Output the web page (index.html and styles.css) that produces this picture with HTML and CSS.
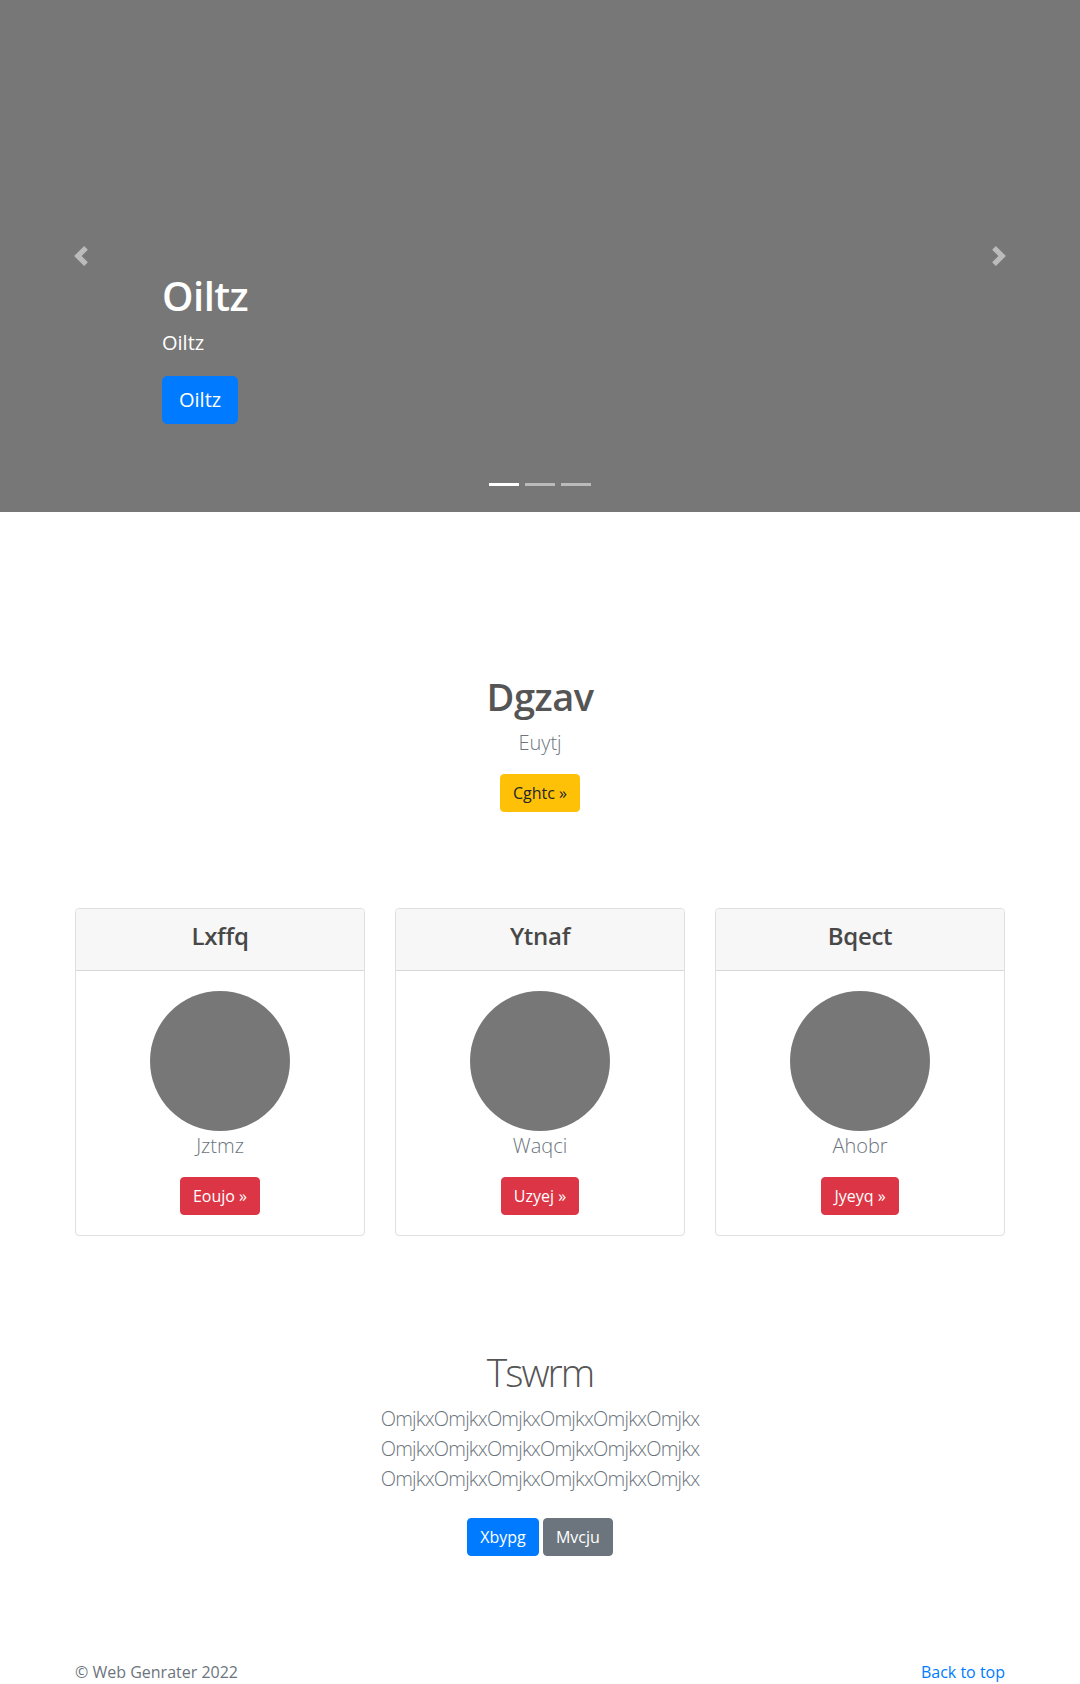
FILE: index.html
```html
<!DOCTYPE html>
<html lang="en">
<head>
<meta charset="utf-8">
<title>Oiltz</title>
<link rel="stylesheet" href="styles.css">
</head>
<body>
<div class="carousel">
  <ol class="indicators">
    <li class="active"></li>
    <li></li>
    <li></li>
  </ol>
  <div class="caption">
    <h1 class="caption-title">Oiltz</h1>
    <p class="caption-sub">Oiltz</p>
    <p class="caption-action"><a class="btn btn-lg btn-primary" href="#">Oiltz</a></p>
  </div>
  <a class="control control-prev" href="#"><svg class="control-icon" viewBox="0 0 8 8" width="20" height="20"><path d="M5.25 0l-4 4 4 4 1.5-1.5-2.5-2.5 2.5-2.5-1.5-1.5z"/></svg></a>
  <a class="control control-next" href="#"><svg class="control-icon" viewBox="0 0 8 8" width="20" height="20"><path d="M2.75 0l-1.5 1.5 2.5 2.5-2.5 2.5 1.5 1.5 4-4-4-4z"/></svg></a>
</div>

<main class="container">
  <section class="intro">
    <h1 class="intro-title">Dgzav</h1>
    <p class="lead">Euytj</p>
    <p><a class="btn btn-warning" href="#">Cghtc &raquo;</a></p>
  </section>

  <div class="cards">
    <div class="card">
      <div class="card-header"><h3 class="card-title">Lxffq</h3></div>
      <div class="card-body">
        <svg class="avatar" width="140" height="140" viewBox="0 0 140 140"><circle cx="70" cy="70" r="70"/></svg>
        <p class="lead card-text">Jztmz</p>
        <a class="btn btn-danger" href="#">Eoujo &raquo;</a>
      </div>
    </div>
    <div class="card">
      <div class="card-header"><h3 class="card-title">Ytnaf</h3></div>
      <div class="card-body">
        <svg class="avatar" width="140" height="140" viewBox="0 0 140 140"><circle cx="70" cy="70" r="70"/></svg>
        <p class="lead card-text">Waqci</p>
        <a class="btn btn-danger" href="#">Uzyej &raquo;</a>
      </div>
    </div>
    <div class="card">
      <div class="card-header"><h3 class="card-title">Bqect</h3></div>
      <div class="card-body">
        <svg class="avatar" width="140" height="140" viewBox="0 0 140 140"><circle cx="70" cy="70" r="70"/></svg>
        <p class="lead card-text">Ahobr</p>
        <a class="btn btn-danger" href="#">Jyeyq &raquo;</a>
      </div>
    </div>
  </div>

  <section class="album">
    <h1 class="album-title">Tswrm</h1>
    <p class="lead album-text">OmjkxOmjkxOmjkxOmjkxOmjkxOmjkx<br>OmjkxOmjkxOmjkxOmjkxOmjkxOmjkx<br>OmjkxOmjkxOmjkxOmjkxOmjkxOmjkx</p>
    <p><a class="btn btn-primary btn-spaced" href="#">Xbypg</a> <a class="btn btn-secondary btn-spaced" href="#">Mvcju</a></p>
  </section>
</main>

<footer class="container footer">
  <p>&copy; Web Genrater 2022</p>
  <p><a class="back-link" href="#">Back to top</a></p>
</footer>
</body>
</html>
```

FILE: styles.css
```css
* { box-sizing: border-box; }

body {
  margin: 0;
  font-family: "Open Sans", "Noto Sans", "Liberation Sans", sans-serif;
  font-size: 16px;
  line-height: 1.5;
  color: #212529;
  background: #fff;
}

p { margin: 0 0 16px; }
h1, h3 { margin: 0 0 8px; }

.container {
  width: 930px;
  margin: 0 auto;
}

/* Buttons */
.btn {
  display: inline-block;
  font-weight: 400;
  text-align: center;
  vertical-align: middle;
  border: 1px solid transparent;
  padding: 6px 12px;
  font-size: 16px;
  line-height: 1.5;
  border-radius: 4px;
  text-decoration: none;
  color: #fff;
}
.btn-lg { padding: 8px 16px; font-size: 20px; border-radius: 5px; }
.btn-primary { background: #007bff; border-color: #007bff; }
.btn-secondary { background: #6c757d; border-color: #6c757d; }
.btn-warning { background: #ffc107; border-color: #ffc107; color: #212529; }
.btn-danger { background: #dc3545; border-color: #dc3545; }
.btn-spaced { margin: 8px 0; vertical-align: baseline; }

.lead {
  font-size: 20px;
  font-weight: 300;
  color: #6c757d;
}

/* Carousel */
.carousel {
  position: relative;
  height: 512px;
  background: #777;
  overflow: hidden;
}
.caption {
  position: absolute;
  left: 15%;
  right: 15%;
  bottom: 52px;
  padding: 20px 0;
  color: #fff;
  z-index: 10;
}
.caption-title {
  font-size: 40px;
  font-weight: 600;
  line-height: 1.2;
  margin-bottom: 8px;
  letter-spacing: -0.5px;
}
.caption-sub {
  font-size: 20px;
  line-height: 1.5;
  margin-bottom: 18px;
}
.caption-action { margin-bottom: 16px; }

.indicators {
  position: absolute;
  left: 15%;
  right: 15%;
  bottom: 0;
  margin: 0 0 16px;
  padding: 0;
  list-style: none;
  display: flex;
  justify-content: center;
  z-index: 15;
}
.indicators li {
  width: 30px;
  height: 23px;
  margin: 0 3px;
  border-top: 10px solid transparent;
  border-bottom: 10px solid transparent;
  background: #fff;
  background-clip: padding-box;
  opacity: .5;
}
.indicators li.active { opacity: 1; }

.control {
  position: absolute;
  top: 0;
  bottom: 0;
  width: 15%;
  display: flex;
  align-items: center;
  justify-content: center;
  opacity: .5;
}
.control-prev { left: 0; }
.control-next { right: 0; }
.control-icon { display: block; fill: #fff; }

/* Intro */
.intro {
  text-align: center;
  padding-top: 162px;
}
.intro-title {
  font-size: 38px;
  font-weight: 600;
  line-height: 1.2;
  color: #555;
  letter-spacing: -0.5px;
}

/* Cards */
.cards {
  margin-top: 96px;
  display: grid;
  grid-template-columns: repeat(3, 1fr);
  gap: 30px;
}
.card {
  border: 1px solid rgba(0, 0, 0, .125);
  border-radius: 4px;
  text-align: center;
  overflow: hidden;
}
.card-header {
  height: 62px;
  padding-top: 13px;
  background: #f7f7f7;
  border-bottom: 1px solid rgba(0, 0, 0, .125);
}
.card-title {
  margin: 0;
  font-size: 24px;
  font-weight: 600;
  line-height: 1.2;
  color: #484848;
  letter-spacing: -0.3px;
}
.card-body { padding: 20px; }
.avatar { display: block; margin: 0 auto; fill: #777; }
.card-text { margin-bottom: 16px; }

/* Album */
.album {
  text-align: center;
  padding-top: 112px;
}
.album-title {
  font-size: 39px;
  font-weight: 300;
  line-height: 1.23;
  color: #555;
  letter-spacing: -2px;
}
.album-text { letter-spacing: -0.8px; }

/* Footer */
.footer {
  display: flex;
  justify-content: space-between;
  padding: 80px 0 48px;
  color: #6c757d;
}
.footer p { margin: 0; }
.back-link { color: #007bff; text-decoration: none; }
```
